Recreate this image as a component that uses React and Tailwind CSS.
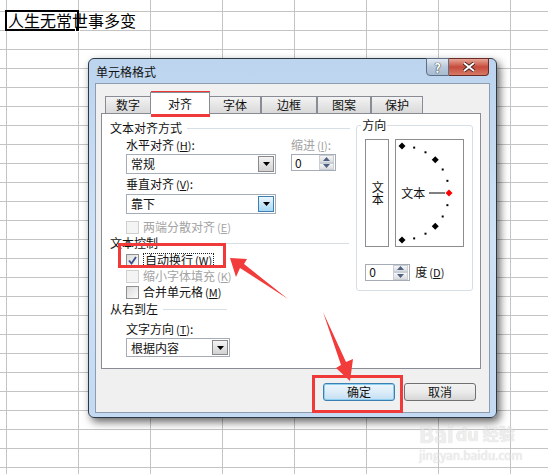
import React from 'react';

const FONT = { fontFamily: '"Noto Sans CJK SC", "Noto Sans", sans-serif' };

function Sheet() {
  const rows = Array.from({ length: 26 });
  const cols = [7, 72, 72, 72, 72, 72, 72, 72];
  return (
    <div className="absolute inset-0 bg-white">
      {rows.map((_, r) => (
        <div
          key={r}
          className={`flex border-b border-[#c4c4c4] ${r === 0 ? 'h-[12px]' : 'h-[19px]'}`}
        >
          {cols.map((w, c) => (
            <div key={c} className="h-full shrink-0 border-r border-[#c4c4c4]" style={{ width: w }} />
          ))}
          <div className="h-full flex-1" />
        </div>
      ))}
    </div>
  );
}

// access key, e.g. (H)
function Key({ k }) {
  return (
    <span className="ml-[2px] text-[11px]">
      (<u>{k}</u>)
    </span>
  );
}

function Label({ children, disabled, className = '' }) {
  return (
    <div
      className={`h-[14px] text-[12px] leading-[14px] whitespace-nowrap ${
        disabled ? 'text-[#a3a3a3]' : 'text-[#111]'
      } ${className}`}
    >
      {children}
    </div>
  );
}

function Header({ children, lineWidth }) {
  return (
    <div className="flex h-[14px] items-center gap-[5px]">
      <span className="text-[12px] leading-[14px] text-[#111]">{children}</span>
      <div className="h-px bg-[#d5dfe5]" style={{ width: lineWidth }} />
    </div>
  );
}

function Arrow() {
  return (
    <svg width="7" height="4" viewBox="0 0 7 4">
      <path d="M0 0h7L3.5 4z" fill="#000" />
    </svg>
  );
}

function Select({ value, width, hot }) {
  return (
    <div
      className="flex h-full items-center border border-[#a5acb5] bg-white pl-[4px]"
      style={{ width }}
    >
      <span className="flex-1 text-[12px] leading-[14px] text-[#111]">{value}</span>
      <div
        className={`mr-px flex h-[calc(100%-2px)] w-[16px] items-center justify-center border ${
          hot
            ? 'border-[#3c7fb1] bg-gradient-to-b from-[#eaf6fd] to-[#a7d9f5]'
            : 'border-[#8a8a8a] bg-gradient-to-b from-[#f4f4f4] to-[#d2d2d2]'
        }`}
      >
        <Arrow />
      </div>
    </div>
  );
}

function Spinner({ width }) {
  return (
    <div
      className="flex h-[17px] items-center border border-[#a5acb5] bg-white pl-[3px]"
      style={{ width }}
    >
      <span className="flex-1 text-[12px] leading-[14px] text-[#111]">0</span>
      <div className="mr-px flex h-[15px] w-[15px] flex-col">
        <div className="flex flex-1 items-center justify-center border border-[#c8ced6] bg-gradient-to-b from-[#f6f6f6] to-[#dcdcdc]">
          <svg width="7" height="4" viewBox="0 0 7 4">
            <path d="M0 4h7L3.5 0z" fill="#4d6185" />
          </svg>
        </div>
        <div className="flex flex-1 items-center justify-center border border-[#c8ced6] bg-gradient-to-b from-[#f6f6f6] to-[#dcdcdc]">
          <svg width="7" height="4" viewBox="0 0 7 4">
            <path d="M0 0h7L3.5 4z" fill="#4d6185" />
          </svg>
        </div>
      </div>
    </div>
  );
}

function Check({ checked, disabled }) {
  return (
    <div
      className={`flex h-[13px] w-[13px] shrink-0 items-center justify-center border ${
        disabled ? 'border-[#cfcfcf] bg-[#f4f4f4]' : 'border-[#8e8f8f] bg-gradient-to-br from-[#dcdcdc] to-[#fbfbfb]'
      }`}
    >
      {checked && (
        <svg width="9" height="9" viewBox="0 0 9 9">
          <path d="M1 4.5l2.5 3L8 1" fill="none" stroke="#3c4f8c" strokeWidth="1.8" />
        </svg>
      )}
    </div>
  );
}

function CheckRow({ children, checked, disabled, focus }) {
  return (
    <div className="flex h-[14px] items-center gap-[4px] pl-[16px]">
      <Check checked={checked} disabled={disabled} />
      <span
        className={`text-[12px] leading-[12px] whitespace-nowrap ${disabled ? 'text-[#a3a3a3]' : 'text-[#111]'} ${
          focus ? 'border border-dotted border-[#222] px-px' : ''
        }`}
      >
        {children}
      </span>
    </div>
  );
}

function Dial() {
  const cx = 6;
  const cy = 53;
  const r = 47;
  const pts = [];
  for (let a = 90; a >= -90; a -= 15) {
    const rad = (a * Math.PI) / 180;
    pts.push({ a, x: cx + r * Math.cos(rad), y: cy - r * Math.sin(rad) });
  }
  return (
    <svg className="absolute left-0 top-0" width="69" height="108" viewBox="0 0 69 108">
      {pts.map((p) =>
        p.a % 45 === 0 ? (
          <path
            key={p.a}
            d={`M${p.x} ${p.y - 3.5}L${p.x + 3.5} ${p.y}L${p.x} ${p.y + 3.5}L${p.x - 3.5} ${p.y}z`}
            fill={p.a === 0 ? '#ff0000' : '#000'}
          />
        ) : (
          <rect key={p.a} x={p.x - 1} y={p.y - 1} width="2" height="2" fill="#000" />
        )
      )}
      <line x1="33" y1="53" x2="49" y2="53" stroke="#000" strokeWidth="1" />
    </svg>
  );
}

function Tabs() {
  const tabs = [
    ['数字', 46],
    ['对齐', 60],
    ['字体', 52],
    ['边框', 56],
    ['图案', 54],
    ['保护', 52],
  ];
  return (
    <div className="relative z-10 flex h-[22px] items-end pl-[9px]">
      {tabs.map(([t, w], i) =>
        i === 1 ? (
          <div
            key={t}
            className="-mx-[1px] flex h-[22px] items-center justify-center border border-b-0 border-[#898c95] bg-white text-[12px] text-[#111]"
            style={{ width: w }}
          >
            {t}
          </div>
        ) : (
          <div
            key={t}
            className="flex h-[18px] items-center justify-center border border-[#898c95] bg-gradient-to-b from-[#f3f3f3] to-[#d9d9d9] text-[12px] text-[#111]"
            style={{ width: w }}
          >
            {t}
          </div>
        )
      )}
    </div>
  );
}

function Dialog() {
  return (
    <div
      className="absolute left-[88px] top-[58px] flex h-[360px] w-[409px] flex-col rounded-[6px] border border-[#2e3946] bg-gradient-to-b from-[#bcd4ee] via-[#cfe2f6] to-[#c3daf2] shadow-[3px_4px_9px_rgba(0,0,0,0.6)]"
      style={FONT}
    >
      {/* Title bar */}
      <div className="relative flex h-[24px] items-center pl-[7px]">
        <span className="mt-[1px] text-[12px] text-[#111]">单元格格式</span>
        <div className="absolute right-[7px] -top-px flex h-[18px]">
          <div className="flex w-[23px] items-center justify-center rounded-bl-[4px] border border-[#5c6f86] bg-gradient-to-b from-[#e2ebf5] via-[#b9c9db] to-[#a8bbd1]">
            <span className="text-[13px] font-bold leading-none text-white [text-shadow:0_0_1px_#222,0_0_1px_#222]">?</span>
          </div>
          <div className="flex w-[40px] items-center justify-center rounded-br-[4px] border border-l-0 border-[#6b2b26] bg-gradient-to-b from-[#e6a596] via-[#c64a3c] to-[#d57a66]">
            <svg width="14" height="10" viewBox="0 0 14 10">
              <path d="M2 1l10 8M12 1L2 9" stroke="#3a1a17" strokeWidth="3.6" />
              <path d="M2 1l10 8M12 1L2 9" stroke="#fff" strokeWidth="2" />
            </svg>
          </div>
        </div>
      </div>

      {/* Client area */}
      <div className="mx-[6px] mb-[4px] flex flex-1 flex-col border border-[#8d9cae] bg-[#f0f0f0] pt-[8px]">
        <Tabs />
        <div className="-mt-px ml-[5px] mr-[8px] flex h-[256px] border border-[#898c95] bg-white">
          {/* Left column */}
          <div className="flex w-[255px] flex-col pl-[8px] pt-[7px]">
            <Header lineWidth={163}>文本对齐方式</Header>
            <div className="mt-[3px] flex pl-[16px]">
              <Label className="w-[165px]">
                水平对齐<Key k="H" />:
              </Label>
              <Label disabled>
                缩进<Key k="I" />:
              </Label>
            </div>
            <div className="mt-[2px] flex h-[20px] pl-[16px]">
              <Select value="常规" width={150} />
              <div className="ml-[15px]">
                <Spinner width={45} />
              </div>
            </div>
            <Label className="mt-[3px] pl-[16px]">
              垂直对齐<Key k="V" />:
            </Label>
            <div className="mt-[3px] h-[20px] pl-[16px]">
              <Select value="靠下" width={150} hot />
            </div>
            <div className="mt-[6px]">
              <CheckRow disabled>
                两端分散对齐<Key k="E" />
              </CheckRow>
            </div>
            <div className="mt-[2px]">
              <Header lineWidth={186}>文本控制</Header>
            </div>
            <div className="mt-[3px]">
              <CheckRow checked focus>
                自动换行<Key k="W" />
              </CheckRow>
            </div>
            <div className="mt-[2px]">
              <CheckRow disabled>
                缩小字体填充<Key k="K" />
              </CheckRow>
            </div>
            <div className="mt-[2px]">
              <CheckRow>
                合并单元格<Key k="M" />
              </CheckRow>
            </div>
            <div className="mt-[3px]">
              <Header lineWidth={64}>从右到左</Header>
            </div>
            <Label className="mt-[6px] pl-[16px]">
              文字方向<Key k="T" />:
            </Label>
            <div className="mt-[2px] h-[19px] pl-[16px]">
              <Select value="根据内容" width={104} />
            </div>
          </div>

          {/* Right column: 方向 */}
          <div className="ml-auto mr-[7px] mt-[11px] h-[166px] w-[117px]">
            <div className="relative h-full rounded-[3px] border border-[#d5dfe5] px-[8px] pt-[13px]">
              <span className="absolute -top-[8px] left-[4px] bg-white px-px text-[12px] leading-[14px] text-[#111]">
                方向
              </span>
              <div className="flex h-[108px] gap-[6px]">
                <div className="flex w-[24px] items-center justify-center border border-[#8d8d8d]">
                  <span className="text-[12px] leading-[14px] text-[#111] [text-orientation:upright] [writing-mode:vertical-rl]">
                    文本
                  </span>
                </div>
                <div className="relative flex flex-1 items-center border border-[#8d8d8d] pl-[5px]">
                  <Dial />
                  <span className="relative text-[12px] leading-[14px] text-[#111]">文本</span>
                </div>
              </div>
              <div className="mt-[16px] flex items-center gap-[5px]">
                <Spinner width={45} />
                <span className="text-[12px] text-[#111]">
                  度<Key k="D" />
                </span>
              </div>
            </div>
          </div>
        </div>

        {/* Buttons */}
        <div className="mt-[14px] flex justify-end gap-[9px] pr-[13px]">
          <button className="flex h-[18px] w-[72px] items-center justify-center rounded-[3px] border border-[#3c7fb1] bg-gradient-to-b from-[#eef6fc] via-[#dcecf8] to-[#c3dff3] text-[12px] text-[#111] shadow-[inset_0_0_0_1px_#8fd0f2]">
            确定
          </button>
          <button className="flex h-[18px] w-[72px] items-center justify-center rounded-[3px] border border-[#707070] bg-gradient-to-b from-[#f2f2f2] via-[#ebebeb] to-[#d6d6d6] text-[12px] text-[#111]">
            取消
          </button>
        </div>
      </div>
    </div>
  );
}

function Annotations() {
  return (
    <>
      <div className="absolute left-[151px] top-[91px] h-[26px] w-[59px] border-[3px] border-[#f03a3a]" />
      <div className="absolute left-[118px] top-[243px] h-[25px] w-[108px] border-[3px] border-[#f03a3a]" />
      <div className="absolute left-[312px] top-[375px] h-[38px] w-[91px] border-[3px] border-[#f03a3a]" />
      <svg className="absolute left-0 top-0" width="548" height="474" viewBox="0 0 548 474">
        <polygon points="230,258 247,259 244,264 288,299 240,268 236,277" fill="#f23b3b" />
        <polygon points="350,381 336,368 341,365 323,312 346,362 353,359" fill="#f23b3b" />
      </svg>
      {/* watermark */}
      <div className="absolute left-[419px] top-[420px] flex flex-col items-start opacity-60" style={FONT}>
        <div className="flex h-[26px] items-center">
          <span className="text-[22px] font-bold leading-[26px] text-[#e4e4e4] [text-shadow:0_0_1px_#b5b5b5]">Bai</span>
          <span className="ml-[2px] text-[18px] font-bold leading-[26px] text-[#e4e4e4] [text-shadow:0_0_1px_#b5b5b5]">du</span>
          <span className="ml-[4px] text-[16px] font-bold leading-[26px] text-[#e4e4e4] [text-shadow:0_0_1px_#b5b5b5]">经验</span>
        </div>
        <span className="mt-[2px] text-[12px] leading-[14px] text-[#e4e4e4] [text-shadow:0_0_1px_#b5b5b5]">jingyan.baidu.com</span>
      </div>
    </>
  );
}

export default function App() {
  return (
    <div className="relative h-[474px] w-[548px] overflow-hidden bg-white">
      <Sheet />
      {/* selected cell */}
      <div className="absolute left-[5px] top-[10px] h-[21px] w-[74px] border-2 border-black" />
      <div className="absolute left-[75px] top-[27px] h-[5px] w-[5px] border border-white bg-black" />
      <div
        className="absolute left-[8px] top-[11px] h-[19px] text-[16px] leading-[19px] text-black"
        style={FONT}
      >
        人生无常世事多变
      </div>
      <Dialog />
      <Annotations />
    </div>
  );
}
